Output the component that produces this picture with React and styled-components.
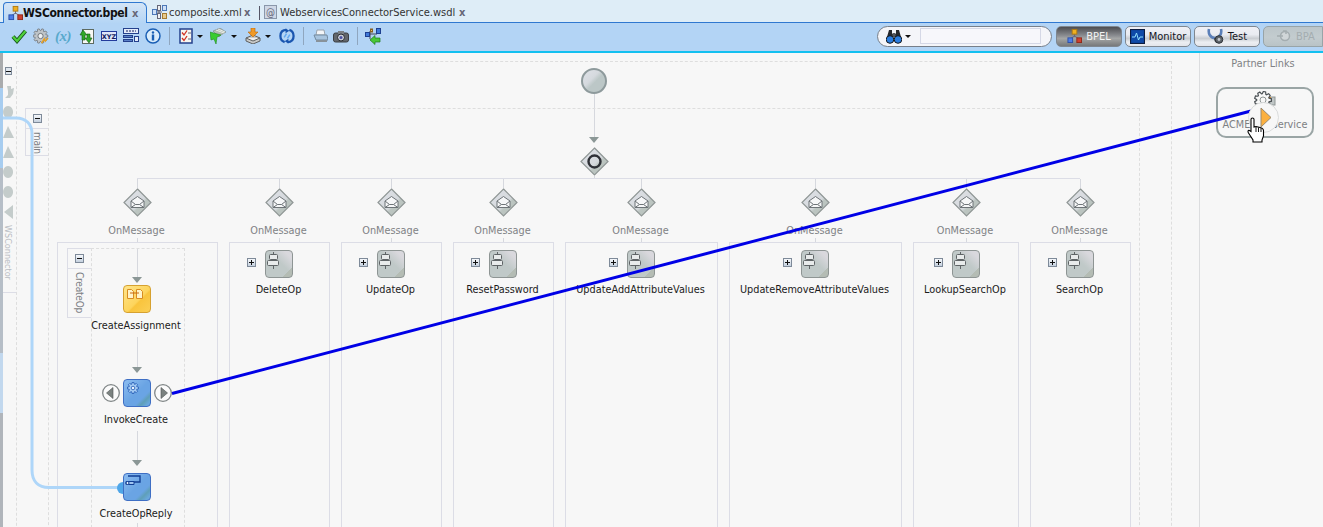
import React from 'react';
import styled, { createGlobalStyle } from 'styled-components';

const GlobalStyle = createGlobalStyle`
  html, body {
    margin: 0;
    padding: 0;
    background: #f7f7f7;
  }
  * {
    box-sizing: border-box;
  }
`;

const Page = styled.div`
  position: relative;
  width: 1323px;
  height: 527px;
  overflow: hidden;
  display: flex;
  flex-direction: column;
  background: #f7f7f7;
  font-family: "DejaVu Sans Condensed", "DejaVu Sans", sans-serif;
  font-size: 11px;
  color: #222;
`;

/* tabs */
const TabBar = styled.div`
  height: 23px;
  flex-shrink: 0;
  display: flex;
  align-items: flex-end;
  padding-left: 3px;
  background: #deedf7;
  border-bottom: 1px solid #2f78d0;
`;

const Tab = styled.div`
  display: flex;
  align-items: center;
  height: ${(p) => (p.$active ? '21px' : '20px')};
  width: ${(p) => p.$width}px;
  flex-shrink: 0;
  margin-bottom: ${(p) => (p.$active ? '-1px' : '0')};
  padding-left: ${(p) => p.$pad}px;
  gap: ${(p) => (p.$active ? 0 : 2)}px;
  font-size: ${(p) => (p.$active ? '12px' : '11px')};
  letter-spacing: ${(p) => (p.$active ? '-0.4px' : '0')};
  font-weight: ${(p) => (p.$active ? 700 : 400)};
  color: ${(p) => (p.$active ? '#111' : '#333')};
  background: ${(p) => (p.$active ? 'linear-gradient(#d4e5f6, #b4d5f5)' : 'transparent')};
  border: ${(p) => (p.$active ? '1px solid #2f78d0' : 'none')};
  border-bottom: none;
  border-radius: 4px 6px 0 0;
`;

const TabLabel = styled.span`
  flex: 1;
  white-space: nowrap;
`;

const TabClose = styled.span`
  width: ${(p) => p.$width ?? 17}px;
  flex-shrink: 0;
  font-size: 11px;
  font-weight: 700;
  color: #667;
`;

const TabDivider = styled.span`
  width: 1px;
  height: 14px;
  flex-shrink: 0;
  margin: 0 4px 2px -2px;
  background: #556;
  align-self: flex-end;
`;

const AtBadge = styled.span`
  width: 13px;
  height: 14px;
  margin-right: 1px;
  display: flex;
  align-items: center;
  justify-content: center;
  font-size: 10px;
  color: #667;
  background: #cfd8e6;
  border: 1px solid #8a97aa;
`;

/* toolbar */
const Toolbar = styled.div`
  height: 30px;
  flex-shrink: 0;
  display: flex;
  align-items: center;
  padding: 0 0 2px 11px;
  background: #b3d4f5;
  border-bottom: 2px solid #12c0f0;
`;

const Tool = styled.span`
  width: 16px;
  height: 16px;
  flex-shrink: 0;
  display: flex;
  align-items: center;
  justify-content: center;
  margin-right: ${(p) => p.$gap ?? 6}px;
`;

const VarGlyph = styled.span`
  font-family: "Liberation Serif", serif;
  font-style: italic;
  font-weight: 700;
  font-size: 15px;
  letter-spacing: -0.5px;
  color: #58a9cc;
  white-space: nowrap;
`;

const Caret = styled.span`
  width: 0;
  height: 0;
  flex-shrink: 0;
  margin-right: ${(p) => p.$gap ?? 8}px;
  border-left: 3px solid transparent;
  border-right: 3px solid transparent;
  border-top: 3px solid #111;
`;

const ToolSeparator = styled.span`
  width: 1px;
  height: 18px;
  flex-shrink: 0;
  margin: 0 ${(p) => p.$right ?? 8}px 0 2px;
  background: #8fa6bf;
`;

const ToolbarRight = styled.div`
  margin-left: auto;
  display: flex;
  align-items: center;
  gap: 3px;
`;

const SearchPill = styled.div`
  width: 175px;
  height: 21px;
  margin-right: 1px;
  display: flex;
  align-items: center;
  padding: 0 10px 0 8px;
  background: #f4f5f9;
  border: 1px solid #777f8a;
  border-radius: 11px;
`;

const SearchCaret = styled(Caret)`
  margin: 0 9px 0 3px;
`;

const SearchInput = styled.span`
  flex: 1;
  height: 16px;
  background: #f7f7fb;
  border: 1px solid #d5d8e6;
`;

const ModeButton = styled.div`
  width: ${(p) => p.$width ?? 66}px;
  height: 21px;
  flex-shrink: 0;
  display: flex;
  align-items: center;
  justify-content: ${(p) => (p.$clip ? 'flex-start' : 'center')};
  padding-left: ${(p) => (p.$clip ? '12px' : '0')};
  gap: ${(p) => (p.$clip ? 2 : 4)}px;
  font-size: 11px;
  border: 1px solid ${(p) => (p.$variant === 'off' ? '#98a4a8' : '#7f8790')};
  border-radius: ${(p) => (p.$clip ? '5px 0 0 5px' : '5px')};
  color: ${(p) =>
    p.$variant === 'active' ? '#f3f3f3' : p.$variant === 'off' ? '#a4adb0' : '#15151d'};
  background: ${(p) =>
    p.$variant === 'active'
      ? 'linear-gradient(#4c4c50 0%, #8a8c90 45%, #a4a6a6 60%, #77797b 100%)'
      : p.$variant === 'off'
        ? 'linear-gradient(#bcc6ca, #c3cccf 55%, #b9c3c6)'
        : 'linear-gradient(#eff0f6 0%, #e9ebf1 40%, #c9cdd2 60%, #eceef2 80%, #e3e5ea 100%)'};
`;

/* canvas */
const Canvas = styled.div`
  flex: 1;
  min-height: 0;
  display: flex;
  overflow: hidden;
`;

const EdgeStrip = styled.div`
  width: 3px;
  flex-shrink: 0;
  background: linear-gradient(#a9abad 0 35px, #a7cdf0 35px 115px, #b6bec7 115px 300px, #c2d8ee 300px 360px, #b0b5bb 360px);
`;

const ProcessLane = styled.div`
  width: 13px;
  height: 232px;
  margin-top: 8px;
  flex-shrink: 0;
  display: flex;
  flex-direction: column;
  align-items: center;
  border-bottom: 1px solid #dcdde6;
`;

const LaneToggle = styled.span`
  width: 7px;
  height: 8px;
  margin: 6px 2px 10px 0;
  display: flex;
  align-items: center;
  justify-content: center;
  background: #dfe6ee;
  border: 1px solid #7e8a99;
  &::after {
    content: '';
    width: 5px;
    height: 1px;
    background: #111;
  }
`;

const LaneGhost = styled.span`
  width: 11px;
  height: 14px;
  margin-bottom: 6px;
  margin-left: -2px;
  display: flex;
`;

const LaneTitle = styled.span`
  writing-mode: vertical-rl;
  margin-top: 0;
  margin-left: -3px;
  font-size: 9px;
  color: #b9bcc2;
`;

const OuterScope = styled.div`
  width: 1156px;
  height: 520px;
  margin-top: 8px;
  flex-shrink: 0;
  display: flex;
  flex-direction: column;
  padding-top: 6px;
  border: 1px dashed #dedede;
`;

const StartEvent = styled.div`
  width: 26px;
  height: 26px;
  align-self: center;
  flex-shrink: 0;
  margin-right: 1px;
  border-radius: 50%;
  border: 2px solid #8e9a9c;
  background: linear-gradient(135deg, #dfe2e8 0%, #d5d9de 40%, #bcc7c7 55%, #bcc7c7 100%);
`;

const FlowStack = styled.div`
  flex-shrink: 0;
  display: flex;
  flex-direction: column;
  align-items: center;
`;

const FlowLine = styled.div`
  width: 1px;
  flex-shrink: 0;
  height: ${(p) => p.$h}px;
  margin-top: ${(p) => p.$top ?? 0}px;
  background: #d6d8de;
`;

const FlowHead = styled.div`
  width: 0;
  height: 0;
  flex-shrink: 0;
  margin-bottom: ${(p) => p.$gap ?? 4}px;
  border-left: 5px solid transparent;
  border-right: 5px solid transparent;
  border-top: 6px solid #8b9796;
`;

const ScopeRow = styled.div`
  display: flex;
  flex: 1;
  min-height: 0;
  margin-left: 8px;
`;

const ScopeTab = styled.div`
  width: ${(p) => p.$width}px;
  height: ${(p) => p.$height}px;
  flex-shrink: 0;
  display: flex;
  flex-direction: column;
  align-items: center;
  border: 1px solid #dcdde6;
  border-right: none;
`;

const ScopeToggleCell = styled.div`
  width: 100%;
  height: 20px;
  flex-shrink: 0;
  display: flex;
  align-items: center;
  justify-content: center;
  border-bottom: 1px solid #dcdde6;
`;

const Toggle = styled.span`
  width: 9px;
  height: 9px;
  flex-shrink: 0;
  position: relative;
  display: block;
  background: linear-gradient(#f6f8fb, #c4d0de);
  border: 1px solid #7e8a99;
  &::before {
    content: '';
    position: absolute;
    left: 1px;
    top: 3px;
    width: 5px;
    height: 1px;
    background: #111;
  }
  &::after {
    content: '';
    display: ${(p) => (p.$plus ? 'block' : 'none')};
    position: absolute;
    left: 3px;
    top: 1px;
    width: 1px;
    height: 5px;
    background: #111;
  }
`;

const ScopeTitle = styled.span`
  writing-mode: vertical-rl;
  margin-top: 3px;
  font-size: 10px;
  letter-spacing: -0.2px;
  color: #7d7f85;
`;

const MainBody = styled.div`
  width: 1092px;
  flex-shrink: 0;
  display: flex;
  flex-direction: column;
  align-items: center;
  border: 1px dashed #dedede;
`;

const BranchArea = styled.div`
  align-self: stretch;
  padding-left: 8px;
`;

const Rail = styled.div`
  height: 1px;
  width: 943px;
  margin-left: 80px;
  background: #dcdde6;
`;

const BranchRow = styled.div`
  display: flex;
  gap: 11px;
`;

const Branch = styled.div`
  width: ${(p) => p.$width}px;
  flex-shrink: 0;
  display: flex;
  flex-direction: column;
  align-items: center;
`;

const EventLabel = styled.div`
  height: 14px;
  line-height: 14px;
  margin-top: 7px;
  padding-right: 2px;
  font-size: 10.8px;
  color: #808285;
  white-space: nowrap;
`;

const BranchBox = styled.div`
  align-self: stretch;
  height: 330px;
  padding-top: 7px;
  display: flex;
  flex-direction: column;
  align-items: stretch;
  border: 1px solid #dcdde6;
`;

const ExpandedBox = styled(BranchBox)`
  flex-direction: row;
  padding: 5px 0 0 9px;
`;

const CollapsedRow = styled.div`
  display: grid;
  grid-template-columns: 1fr 28px 1fr;
  align-items: center;
  padding-right: 1px;
`;

const ExpandSlot = styled.div`
  justify-self: end;
  margin: 0 9px 3px 0;
`;

const ActivityBlock = styled.div`
  width: 28px;
  height: 28px;
  flex-shrink: 0;
  display: flex;
  align-items: flex-start;
  justify-content: flex-start;
  padding: ${(p) => p.$glyphTop ?? 0}px 0 0 ${(p) => p.$glyphLeft ?? 1}px;
  overflow: hidden;
  border-radius: 4px;
  border: 1.5px solid ${(p) =>
    p.$kind === 'assign' ? '#d6a130' : p.$kind === 'blue' ? '#3f6fc4' : '#8e9594'};
  background: ${(p) =>
    p.$kind === 'assign'
      ? 'linear-gradient(135deg, #ffe58c 0%, #fdd45c 55%, #f9c43d 60%, #fbcf55 100%)'
      : p.$kind === 'blue'
        ? 'linear-gradient(135deg, #8dbdf0 0%, #6aa4e4 50%, #6aa4e4 70%, #5f9fb8 80%, #6aa8dc 92%)'
        : 'linear-gradient(135deg, transparent 82%, #b4bcb4 82%), linear-gradient(45deg, #c0c9c8 55%, #d9d8dd 85%)'};
`;

const ActivityLabel = styled.div`
  height: 14px;
  line-height: 14px;
  margin-top: ${(p) => p.$top ?? 5}px;
  padding-right: 2px;
  text-align: center;
  font-size: 10.8px;
  color: #1b1b1b;
  white-space: nowrap;
`;

const ScopeBody = styled.div`
  width: 94px;
  height: 300px;
  flex-shrink: 0;
  display: flex;
  flex-direction: column;
  align-items: center;
  padding-right: 2px;
  border: 1px dashed #dedede;
`;

const InvokeRow = styled.div`
  display: flex;
  align-items: center;
  gap: 3px;
`;

/* partner links */
const PartnerRail = styled.div`
  width: 124px;
  flex-shrink: 0;
  margin-left: auto;
  padding-top: 4px;
  border-left: 1px solid #dcdddf;
`;

const PartnerTitle = styled.div`
  height: 14px;
  line-height: 14px;
  padding-left: 3px;
  text-align: center;
  font-size: 10.8px;
  color: #808285;
`;

const PartnerCard = styled.div`
  position: relative;
  width: 98px;
  height: 51px;
  margin: 16px 0 0 16px;
  display: flex;
  flex-direction: column;
  align-items: center;
  padding-top: 2px;
  border: 2px solid #9aa5a5;
  border-radius: 10px;
`;

const PartnerName = styled.div`
  margin-top: 9px;
  font-size: 10.8px;
  line-height: 14px;
  color: #7d8083;
  white-space: nowrap;
`;

const WireMarker = styled.div`
  position: absolute;
  z-index: 2;
  left: 30px;
  top: 13px;
  width: 31px;
  height: 31px;
  display: flex;
  align-items: center;
  justify-content: center;
  padding-left: 4px;
  border-radius: 50%;
  background: #f7f7f7;
  border: 1px solid #dadcdc;
`;

const HandCursor = styled.svg`
  position: absolute;
  z-index: 3;
  left: 29px;
  top: 28px;
`;

const WireLayer = styled.svg`
  position: absolute;
  left: 0;
  top: 0;
  z-index: 1;
  pointer-events: none;
`;

const ghostColor = '#c4cccb';

// toothed outline shared by the gear icons
const gearPath = (cx, cy, outer, inner, teeth) => {
  const step = (Math.PI * 2) / teeth;
  const pts = [];
  for (let i = 0; i < teeth; i++) {
    const a = i * step;
    [
      [a - step * 0.42, inner],
      [a - step * 0.2, outer],
      [a + step * 0.2, outer],
      [a + step * 0.42, inner],
    ].forEach(([t, r]) => {
      pts.push(`${(cx + Math.cos(t) * r).toFixed(2)} ${(cy + Math.sin(t) * r).toFixed(2)}`);
    });
  }
  return `M${pts.join('L')}z`;
};

const Network = () => (
  <svg width="15" height="16" viewBox="0 0 16 16">
    <path d="M8 5v4M3.5 11 8 8l4.500 3" stroke="#667" fill="none" />
    <rect x="5.500" y="1" width="5" height="5" fill="#f0b020" stroke="#b07a10" />
    <rect x="1" y="10" width="5" height="5" fill="#4d7de8" stroke="#2a4fa8" />
    <rect x="10.500" y="10" width="5" height="5" fill="#d04030" stroke="#902818" />
  </svg>
);

const Composite = () => (
  <svg width="15" height="16" viewBox="0 0 15 16">
    <path d="M5 8h5M7 3v10" stroke="#667" fill="none" />
    <rect x="0.500" y="5.500" width="4" height="5" fill="#cfe0f6" stroke="#4d78b8" />
    <rect x="5.500" y="1.500" width="3" height="5" fill="#eef0f3" stroke="#667" />
    <rect x="5.500" y="9.500" width="3" height="5" fill="#eef0f3" stroke="#667" />
    <rect x="10.500" y="1.500" width="4" height="5" fill="#cfe0f6" stroke="#4d78b8" />
    <rect x="10.500" y="9.500" width="4" height="5" fill="#e8c98a" stroke="#a67c30" />
  </svg>
);

const Check = () => (
  <svg width="16" height="16" viewBox="0 0 16 16">
    <path d="M2 8.500 6 13 14.500 3" stroke="#17521a" strokeWidth="4" fill="none" />
    <path d="M2 8.500 6 13 14.500 3" stroke="#4fd03c" strokeWidth="2.200" fill="none" />
  </svg>
);

const ToolGear = () => (
  <svg width="17" height="17" viewBox="0 0 17 17">
    <path d={gearPath(8, 8, 7.8, 5.8, 10)} fill="#bfc4c8" stroke="#6d7276" strokeWidth="0.800" />
    <circle cx="8" cy="8" r="2.800" fill="#eef0f2" stroke="#6d7276" />
    <path d="M9 15.500l3-4.500 1 2.500 3-3.500" stroke="#e8a020" strokeWidth="1.500" fill="none" />
  </svg>
);

const DocSwap = () => (
  <svg width="16" height="17" viewBox="0 0 16 17">
    <rect x="3.500" y="1.500" width="11" height="14" fill="#f7f8f4" stroke="#5d6a60" />
    <path d="M3 1 7 6H5v5H2V6H0z" transform="translate(1 1)" fill="#2fa82a" stroke="#155a16" strokeWidth="0.600" />
    <path d="M10 15 6 10h2V6h3v4h2z" fill="#2fa82a" stroke="#155a16" strokeWidth="0.600" />
  </svg>
);

const XyzBadge = () => (
  <svg width="16" height="10" viewBox="0 0 16 10">
    <rect x="0.500" y="0.500" width="15" height="9" fill="#dfe6f8" stroke="#243c9c" />
    <text x="8" y="7.500" textAnchor="middle" fontSize="6.500" fontWeight="700" fill="#111c60" fontFamily="DejaVu Sans">XYZ</text>
  </svg>
);

const XyzList = () => (
  <svg width="16" height="16" viewBox="0 0 16 16">
    <rect x="0.500" y="0.500" width="15" height="5" fill="#e4ebf9" stroke="#24408c" />
    <rect x="0.500" y="7.500" width="9" height="2" fill="#5a80c8" stroke="#24408c" />
    <rect x="0.500" y="11.500" width="9" height="2" fill="#5a80c8" stroke="#24408c" />
    <rect x="11.500" y="8.500" width="4" height="5" fill="#e4ebf9" stroke="#24408c" />
    <path d="M3 3h10" stroke="#111c60" strokeDasharray="2 1" />
  </svg>
);

const Info = () => (
  <svg width="16" height="16" viewBox="0 0 16 16">
    <circle cx="8" cy="8" r="7" fill="#d9ecfb" stroke="#1a5fb4" strokeWidth="1.500" />
    <circle cx="8" cy="4.500" r="1.200" fill="#1a5fb4" />
    <rect x="6.800" y="6.500" width="2.400" height="6" fill="#1a5fb4" />
  </svg>
);

const Checklist = () => (
  <svg width="14" height="16" viewBox="0 0 14 16">
    <rect x="1" y="1" width="12" height="14" fill="#f7f7f2" stroke="#24408c" strokeWidth="1.500" />
    <path d="M3 4.500 5 7 8 2.500M3 10l2 2.500 3-4.500" stroke="#d03020" strokeWidth="1.300" fill="none" />
    <path d="M9 5h3M9 11h3" stroke="#667" />
  </svg>
);

const GreenWedge = () => (
  <svg width="16" height="16" viewBox="0 0 16 16">
    <path d="M3 3 10 0l6 4-5 3-2 2z" fill="#b4bcb4" stroke="#6d7870" strokeWidth="0.500" />
    <path d="M0 4 11 7l-4 2-1 7-2-5-3 1z" fill="#38cc30" stroke="#1f8a1e" strokeWidth="0.600" />
    <path d="M6 2l8 3M8 1l7 3" stroke="#e8ece8" />
  </svg>
);

const Deploy = () => (
  <svg width="16" height="16" viewBox="0 0 16 16">
    <path d="M1 10 8 7l7 3v3l-7 3-7-3z" fill="#c8c9c8" stroke="#5f6060" />
    <path d="M1 10l7 3 7-3" stroke="#5f6060" fill="#efefef" />
    <path d="M6 0h4v4h3L8 9 3 4h3z" fill="#f09a28" stroke="#b8660c" strokeWidth="0.600" />
  </svg>
);

const SyncTool = () => (
  <svg width="17" height="16" viewBox="0 0 17 16">
    <path d="M8 1.500C4 1.500 1.500 4 1.500 8c0 3 1.500 5.500 4.500 6.500" stroke="#1a56b0" strokeWidth="2.400" fill="none" />
    <path d="M9 14.500c4 0 6.500-2.500 6.500-6.500 0-3-1.500-5.500-4.500-6.500" stroke="#1a56b0" strokeWidth="2.400" fill="none" />
    <path d="M7 0v5l4-2.500zM10 16v-5l-4 2.500z" fill="#1a56b0" />
    <path d="M5.500 9.500 8 5.500M11.500 6.500 9 10.500" stroke="#62a8f0" strokeWidth="1.600" fill="none" />
  </svg>
);

const Printer = () => (
  <svg width="15" height="14" viewBox="0 0 15 14">
    <path d="M4 1h7l1 5H3z" fill="#f3f5f8" stroke="#9aa4ad" />
    <path d="M1 6h13l1 5H3z" fill="#a8c4de" stroke="#738aa0" />
    <path d="M3 11h11v2H3z" fill="#88929a" />
  </svg>
);

const Camera = () => (
  <svg width="16" height="13" viewBox="0 0 16 13">
    <rect x="0.500" y="3" width="15" height="9" rx="2" fill="#63676c" stroke="#3b3e42" />
    <rect x="5" y="1" width="6" height="3" fill="#7b8085" />
    <circle cx="8" cy="7.500" r="3.500" fill="#c6cbd4" stroke="#2c2e33" />
    <circle cx="8" cy="7.500" r="1.500" fill="#4a4fa0" />
  </svg>
);

const LinkTool = () => (
  <svg width="16" height="17" viewBox="0 0 16 17">
    <path d="M5 3v8M4 6h8" stroke="#445" fill="none" />
    <rect x="0.500" y="4.500" width="4" height="4" fill="#3e78d8" stroke="#1d3f90" />
    <rect x="5.500" y="1" width="2" height="3" fill="#e8c070" stroke="#886020" />
    <rect x="11.500" y="0.500" width="4" height="5" fill="#3e78d8" stroke="#1d3f90" />
    <path d="M15 10H10V7.500L5 12l5 4.500V14h5z" fill="#48c838" stroke="#1f7a1e" strokeWidth="0.700" />
  </svg>
);

const Binoculars = () => (
  <svg width="16" height="15" viewBox="0 0 16 15">
    <path d="M3 1h3v4h4V1h3l2 7H1z" fill="#26282c" />
    <rect x="6.500" y="4" width="3" height="4" fill="#55585e" />
    <circle cx="4" cy="10.500" r="3.800" fill="#2a7de0" stroke="#15181c" />
    <circle cx="12" cy="10.500" r="3.800" fill="#2a7de0" stroke="#15181c" />
  </svg>
);

const PulseBox = () => (
  <svg width="15" height="15" viewBox="0 0 15 15">
    <rect x="0.500" y="0.500" width="14" height="14" fill="#0f4aa8" stroke="#0c1c40" strokeWidth="1.200" />
    <path d="M2 8h3l1.500-4 2 7L10 8h3" stroke="#8fe0ff" fill="none" />
  </svg>
);

const Stethoscope = () => (
  <svg width="17" height="16" viewBox="0 0 17 16">
    <path d="M2 1C1 5 3 10 8 10s7-5 6-9" stroke="#5b7fb8" strokeWidth="2.600" fill="none" />
    <path d="M8 10c0 2 1 4 3 4" stroke="#44494f" strokeWidth="2" fill="none" />
    <circle cx="12" cy="11.500" r="3.800" fill="#5e646a" stroke="#303338" />
    <circle cx="12" cy="11.500" r="1.400" fill="#c5cad0" />
  </svg>
);

const BpaMark = () => (
  <svg width="18" height="16" viewBox="0 0 18 16">
    <circle cx="9" cy="8" r="4.500" fill="#d0d6d8" stroke="#a4adb0" strokeWidth="1.500" />
    <path d="M1 8h6M7 3h3v3" stroke="#a4adb0" strokeWidth="1.500" fill="none" />
  </svg>
);

const Diamond = ({ open }) => (
  <svg width="29" height="29" viewBox="0 0 29 29">
    <defs>
      <linearGradient id="diamondFill" x1="0" y1="0" x2="1" y2="1">
        <stop offset="0" stopColor="#e2e4e9" />
        <stop offset="0.55" stopColor="#d4d8dc" />
        <stop offset="0.62" stopColor="#bcc5c1" />
        <stop offset="1" stopColor="#b8c1bb" />
      </linearGradient>
    </defs>
    <path d="M14.500 1 28 14.500 14.500 28 1 14.500z" fill="url(#diamondFill)" stroke="#8f9695" strokeWidth="1.200" />
    {open ? (
      <circle cx="14.500" cy="14.500" r="6" fill="none" stroke="#2e3036" strokeWidth="2.400" />
    ) : (
      <g fill="#f6f7f8" stroke="#6e7478" strokeWidth="1">
        <path d="M8 13 14.500 8.500 21 13v6.500H8z" />
        <path d="M8 13l4.500 3.500h4L21 13M8 19.500l4.500-3M21 19.500l-4.500-3" fill="none" />
      </g>
    )}
  </svg>
);

const ScopeGlyph = () => (
  <svg width="14" height="20" viewBox="0 0 14 20">
    <path d="M6.500 1v17" stroke="#5f6466" />
    <rect x="2.500" y="3.500" width="8" height="5" rx="1" fill="#e8ebeb" stroke="#5f6466" />
    <rect x="0.500" y="9.500" width="11" height="5" rx="1" fill="#e8ebeb" stroke="#5f6466" />
  </svg>
);

const AssignGlyph = () => (
  <svg width="17" height="11" viewBox="0 0 17 11">
    <path d="M0.500 0.500h4l2 2v7h-6zM9.500 0.500h4l2 2v7h-6z" fill="#fff3c8" stroke="#d88c20" />
    <path d="M3 4h9" stroke="#c86a10" />
  </svg>
);

const GearGlyph = () => (
  <svg width="12" height="12" viewBox="0 0 12 12">
    <path d={gearPath(6, 6, 5.600, 4, 8)} fill="#a6cdf5" stroke="#1f55b0" strokeWidth="0.800" />
    <circle cx="6" cy="6" r="1.800" fill="#eaf4ff" stroke="#1f55b0" strokeWidth="0.800" />
  </svg>
);

const ReplyGlyph = () => (
  <svg width="16" height="12" viewBox="0 0 16 12">
    <path d="M3 1h12v6H8" fill="none" stroke="#123f95" strokeWidth="1.400" />
    <path d="M1 6.500h8v3H1z" fill="#9fc4f0" stroke="#123f95" />
    <circle cx="2.500" cy="8" r="1.500" fill="#eaf4ff" stroke="#123f95" />
  </svg>
);

const RoundArrow = ({ left }) => (
  <svg width="18" height="18" viewBox="0 0 18 18">
    <circle cx="9" cy="9" r="8.300" fill="#fbfbfb" stroke="#808687" strokeWidth="1.300" />
    <path d={left ? 'M4.500 9 11 3.500v11z' : 'M13.500 9 7 3.500v11z'} fill="#7b8280" stroke="#4d5352" strokeWidth="0.600" />
  </svg>
);

const ServiceGear = () => (
  <svg width="24" height="18" viewBox="0 0 24 18">
    <rect x="15" y="6" width="7" height="8" fill="#c0c6c6" stroke="#8f9695" />
    <rect x="15" y="6" width="3" height="3" fill="#e89020" />
    <path d={gearPath(10, 9, 8.500, 6.300, 9)} fill="#f7f7f7" stroke="#4a5054" strokeWidth="1.200" />
    <circle cx="10" cy="9" r="3" fill="#f7f7f7" stroke="#8f9695" />
  </svg>
);

const PlayGlyph = () => (
  <svg width="12" height="21" viewBox="0 0 12 21">
    <path d="M1 1 11 10.500 1 20z" fill="#fbb040" stroke="#9a8a70" />
  </svg>
);

const Ghost = ({ d }) => (
  <LaneGhost>
    <svg width="11" height="14" viewBox="0 0 11 14">
      <path d={d} fill={ghostColor} />
    </svg>
  </LaneGhost>
);

const ghosts = [
  'M4 1h4v3l3-1-1 6-3 4H2l3-3V6z',
  'M5 1a5 6 0 1 0 .1 0z',
  'M5 1 11 13H0z',
  'M5 1 11 13H0z',
  'M5 1a5 6 0 1 0 .1 0z',
  'M5 1a5 6 0 1 0 .1 0z',
  'M10 0v14L1 7z',
];

const collapsedOps = [
  { name: 'DeleteOp', width: 101 },
  { name: 'UpdateOp', width: 101 },
  { name: 'ResetPassword', width: 101 },
  { name: 'UpdateAddAttributeValues', width: 153 },
  { name: 'UpdateRemoveAttributeValues', width: 173 },
  { name: 'LookupSearchOp', width: 106 },
  { name: 'SearchOp', width: 101 },
];

const BranchHead = () => (
  <>
    <FlowLine $h={9} />
    <Diamond />
    <EventLabel>OnMessage</EventLabel>
    <FlowLine $h={4} />
  </>
);

export default function App() {
  return (
    <Page>
      <GlobalStyle />
      <TabBar>
        <Tab $active $width={144} $pad={4}>
          <Network />
          <TabLabel>WSConnector.bpel</TabLabel>
          <TabClose $width={14}>x</TabClose>
        </Tab>
        <Tab $width={114} $pad={5}>
          <Composite />
          <TabLabel>composite.xml</TabLabel>
          <TabClose>x</TabClose>
        </Tab>
        <TabDivider />
        <Tab $width={212} $pad={0}>
          <AtBadge>@</AtBadge>
          <TabLabel>WebservicesConnectorService.wsdl</TabLabel>
          <TabClose>x</TabClose>
        </Tab>
      </TabBar>

      <Toolbar>
        <Tool><Check /></Tool>
        <Tool><ToolGear /></Tool>
        <Tool $gap={8}><VarGlyph>(x)</VarGlyph></Tool>
        <Tool><DocSwap /></Tool>
        <Tool><XyzBadge /></Tool>
        <Tool><XyzList /></Tool>
        <Tool><Info /></Tool>
        <ToolSeparator />
        <Tool $gap={3}><Checklist /></Tool>
        <Caret $gap={7} />
        <Tool $gap={5}><GreenWedge /></Tool>
        <Caret />
        <Tool $gap={4}><Deploy /></Tool>
        <Caret />
        <Tool><SyncTool /></Tool>
        <ToolSeparator />
        <Tool $gap={5}><Printer /></Tool>
        <Tool><Camera /></Tool>
        <ToolSeparator $right={7} />
        <Tool><LinkTool /></Tool>
        <ToolbarRight>
          <SearchPill>
            <Binoculars />
            <SearchCaret />
            <SearchInput />
          </SearchPill>
          <ModeButton $variant="active"><Network />BPEL</ModeButton>
          <ModeButton><PulseBox />Monitor</ModeButton>
          <ModeButton><Stethoscope />Test</ModeButton>
          <ModeButton $variant="off" $width={60} $clip><BpaMark />BPA</ModeButton>
        </ToolbarRight>
      </Toolbar>

      <Canvas>
        <EdgeStrip />
        <ProcessLane>
          <LaneToggle />
          {ghosts.map((d, i) => (
            <Ghost key={i} d={d} />
          ))}
          <LaneTitle>WSConnector</LaneTitle>
        </ProcessLane>

        <OuterScope>
          <StartEvent />
          <FlowStack>
            <FlowLine $h={14} />
          </FlowStack>
          <ScopeRow>
            <ScopeTab $width={23} $height={48}>
              <ScopeToggleCell><Toggle /></ScopeToggleCell>
              <ScopeTitle>main</ScopeTitle>
            </ScopeTab>
            <MainBody>
              <FlowLine $h={28} />
              <FlowHead />
              <Diamond open />
              <FlowLine $h={2} />
              <BranchArea>
                <Rail />
                <BranchRow>
                  <Branch $width={161}>
                    <BranchHead />
                    <ExpandedBox>
                      <ScopeTab $width={24} $height={70}>
                        <ScopeToggleCell><Toggle /></ScopeToggleCell>
                        <ScopeTitle>CreateOp</ScopeTitle>
                      </ScopeTab>
                      <ScopeBody>
                        <FlowLine $h={28} />
                        <FlowHead $gap={2} />
                        <ActivityBlock $kind="assign" $glyphLeft={3} $glyphTop={3}>
                          <AssignGlyph />
                        </ActivityBlock>
                        <ActivityLabel $top={6}>CreateAssignment</ActivityLabel>
                        <FlowLine $h={30} $top={4} />
                        <FlowHead $gap={6} />
                        <InvokeRow>
                          <RoundArrow left />
                          <ActivityBlock $kind="blue" $glyphLeft={3} $glyphTop={2}>
                            <GearGlyph />
                          </ActivityBlock>
                          <RoundArrow />
                        </InvokeRow>
                        <ActivityLabel $top={6}>InvokeCreate</ActivityLabel>
                        <FlowLine $h={29} $top={4} />
                        <FlowHead $gap={7} />
                        <ActivityBlock $kind="blue" $glyphLeft={1} $glyphTop={1}>
                          <ReplyGlyph />
                        </ActivityBlock>
                        <ActivityLabel $top={6}>CreateOpReply</ActivityLabel>
                        <FlowLine $h={10} $top={2} />
                      </ScopeBody>
                    </ExpandedBox>
                  </Branch>
                  {collapsedOps.map((op) => (
                    <Branch key={op.name} $width={op.width}>
                      <BranchHead />
                      <BranchBox>
                        <CollapsedRow>
                          <ExpandSlot><Toggle $plus /></ExpandSlot>
                          <ActivityBlock><ScopeGlyph /></ActivityBlock>
                        </CollapsedRow>
                        <ActivityLabel>{op.name}</ActivityLabel>
                      </BranchBox>
                    </Branch>
                  ))}
                </BranchRow>
              </BranchArea>
            </MainBody>
          </ScopeRow>
        </OuterScope>

        <PartnerRail>
          <PartnerTitle>Partner Links</PartnerTitle>
          <PartnerCard>
            <ServiceGear />
            <PartnerName>ACMEWebService</PartnerName>
            <WireMarker><PlayGlyph /></WireMarker>
            <HandCursor width="18" height="26" viewBox="0 0 18 26">
              <path
                d="M4 2.500a1.500 1.500 0 0 1 3 0V10l2-.5 2 .5 2 .5 2 .8c1 .5 1.500 1.200 1.500 2.200v5.500l-1.500 4v2H6v-2L1.500 16c-1-1.500-.5-3 1-2.500l1.500 1z"
                fill="#fff"
                stroke="#000"
                strokeWidth="1.100"
              />
              <path d="M9 10v5M11.500 10.500V15M14 11.200V15" stroke="#000" strokeWidth="0.900" />
            </HandCursor>
          </PartnerCard>
        </PartnerRail>
      </Canvas>

      <WireLayer width="1323" height="527" viewBox="0 0 1323 527">
        <path
          d="M3 118H16C26 118 32 124 32 134V470C32 481 38 487.500 49 487.500H118"
          fill="none"
          stroke="#aed6f9"
          strokeWidth="3"
        />
        <path d="M123 482a6 6 0 0 0 0 12z" fill="#4fa6e8" />
        <path d="M172 393.500 1251 111" stroke="#0000e6" strokeWidth="3" fill="none" />
      </WireLayer>
    </Page>
  );
}
